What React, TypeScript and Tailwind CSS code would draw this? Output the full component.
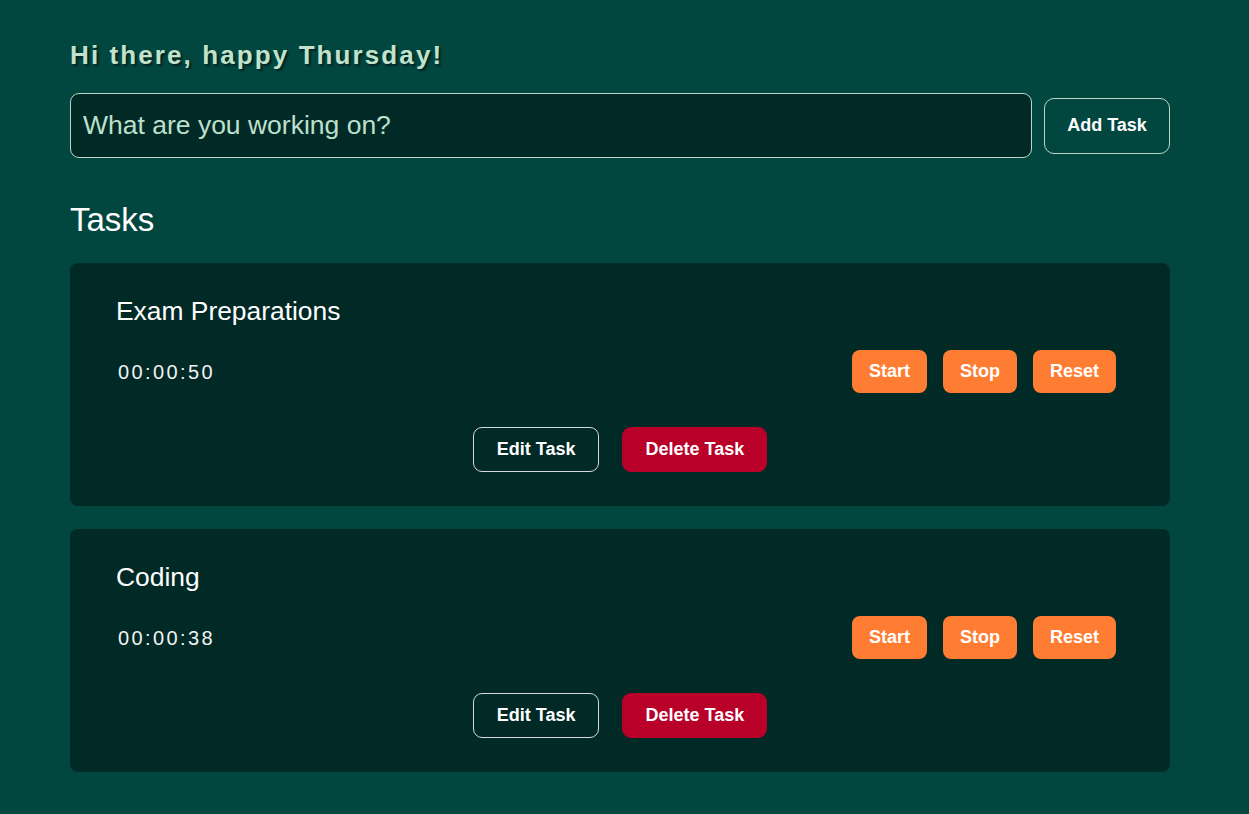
import { useState } from "react";

type Task = { id: number; title: string; time: string };

const tasks: Task[] = [
  { id: 1, title: "Exam Preparations", time: "00:00:50" },
  { id: 2, title: "Coding", time: "00:00:38" },
];

function TaskCard({ task }: { task: Task }) {
  return (
    <div className="rounded-lg bg-[#012926] pt-[33px] pb-[34px] pl-[46px] pr-[54px]">
      <h3 className="text-[26.4px] leading-[30px] text-white">{task.title}</h3>
      <div className="mt-[24px] flex items-center justify-between">
        <span className="pl-[2px] text-[20px] tracking-[2.4px] text-[#f2f2f2]">{task.time}</span>
        <div className="flex gap-[16px]">
          {["Start", "Stop", "Reset"].map((label) => (
            <button
              key={label}
              className="h-[43px] rounded-lg bg-[#ff7d32] px-[17px] text-[18px] font-bold text-white"
            >
              {label}
            </button>
          ))}
        </div>
      </div>
      <div className="mt-[34px] flex justify-center gap-[23px] pl-[8px]">
        <button className="h-[45px] rounded-[9px] border border-[#d8d8d8] px-[23px] text-[18px] font-bold text-white">
          Edit Task
        </button>
        <button className="h-[45px] rounded-[9px] bg-[#b80029] px-[23px] text-[18px] font-bold text-white">
          Delete Task
        </button>
      </div>
    </div>
  );
}

export default function App() {
  const [value, setValue] = useState("");
  return (
    <div className="min-h-screen bg-[#01473f] pt-[40px] pb-[43px] pl-[70px] font-['Liberation_Sans',Arial,sans-serif]">
      <div className="w-[1100px]">
        <h1 className="text-[26px] leading-[30px] font-bold tracking-[2.1px] text-[#c3e2cc] [text-shadow:2px_2px_2px_#00231f]">
          Hi there, happy Thursday!
        </h1>
        <div className="mt-[23px] flex items-center gap-3">
          <input
            value={value}
            onChange={(e) => setValue(e.target.value)}
            placeholder="What are you working on?"
            className="h-[65px] flex-1 rounded-[9px] border border-[#b9d8c6] bg-[#012926] px-3 text-[26.5px] text-[#bde0cc] outline-none placeholder:text-[#bde0cc]"
          />
          <button className="h-[56px] w-[126px] rounded-[10px] border border-[#b9d8c6] text-[18px] font-bold text-white">
            Add Task
          </button>
        </div>
        <h2 className="mt-[43px] text-[33px] leading-[38px] text-white">Tasks</h2>
        <div className="mt-[24px] flex flex-col gap-[23px]">
          {tasks.map((t) => (
            <TaskCard key={t.id} task={t} />
          ))}
        </div>
      </div>
    </div>
  );
}
